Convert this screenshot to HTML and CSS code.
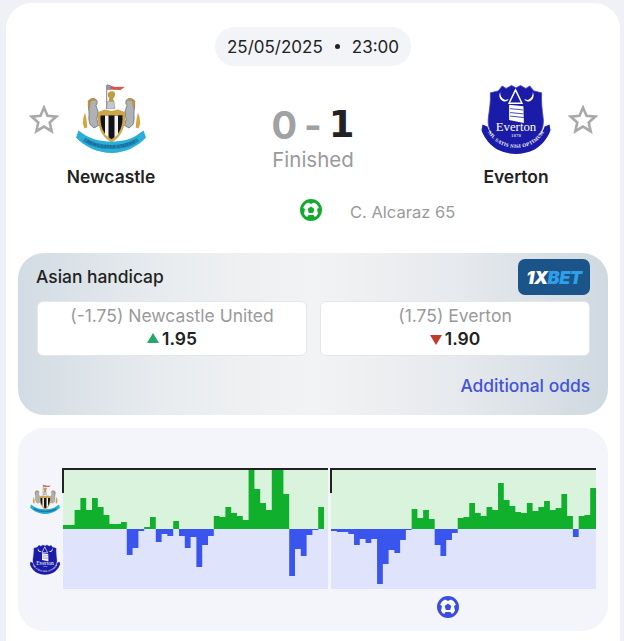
FILE: index.html
```html
<!DOCTYPE html>
<html lang="en">
<head>
<meta charset="utf-8">
<title>Newcastle - Everton</title>
<link rel="stylesheet" href="styles.css">
</head>
<body>
<svg class="defs" width="0" height="0" aria-hidden="true">
  <defs>
    <symbol id="star" viewBox="0 0 30 30">
      <path d="M15 2.6l3.5 8.2 8.9.8-6.7 5.9 2 8.7-7.7-4.6-7.7 4.6 2-8.7-6.700-5.900 8.900-.8z" fill="none" stroke="#a9a9ab" stroke-width="2.600" stroke-linejoin="miter"/>
    </symbol>
    <symbol id="ball" viewBox="0 0 22 22">
      <circle cx="11" cy="11" r="9.500" fill="#fff" stroke="currentColor" stroke-width="3"/>
      <path d="M11 7.500l3.400 2.500-1.300 4h-4.200l-1.300-4z" fill="currentColor"/>
      <path d="M6 2.500l5 2.500 5-2.500-2-1.500h-6zM20.500 8l-3.500 2 1 5 2.500-2zM1.500 8l3.500 2-1 5-2.500-2zM6.500 19l2-3h5l2 3-4.500 2z" fill="currentColor"/>
    </symbol>
    <symbol id="newcastle" viewBox="0 0 70 70">
      <path d="M30.700 1v24" stroke="#7d828c" stroke-width="1"/>
      <path d="M31 .5l8 2.500 10-.2-4.500 3.200L31 5.500z" fill="#d9554c"/>
      <path d="M31 .5l3.500 1v4H31z" fill="#8d94a8"/>
      <path d="M32 9c2-2.500 6-2.500 7 0 .4 2.500-.8 4.500-2 6l1.500 2.500h-6l.8-3.500C32 13.500 31.500 11 32 9z" fill="#c29a45"/>
      <path d="M31.500 17.500h6.500l1 7H30.500z" fill="#c5c7ca" stroke="#6d6f73" stroke-width=".4"/>
      <path d="M7.500 33l1.500-4.500 1.500 7 .8 8-2.800 1-1.700-5z" fill="#d3a63c"/>
      <path d="M63.500 33L62 28.500l-1.500 7-.8 8 2.800 1 1.700-5z" fill="#d3a63c"/>
      <path d="M12 18c1-3.500 6-4.500 8.500-2 1.500 2.500 .5 4-.5 5.500l2 6-1 8 1.500 6-4.500 2.500-4-3.500c-1-3-1.500-6-1-10 .3-4-1.300-7-.5-12.500z" fill="#aeb1b5" stroke="#4c4e52" stroke-width=".6"/>
      <path d="M12 18c1-3.500 6-4.500 8.500-2l-1 1c-3-1-5 0-5 2.500l-.5 6-1.500-2c0-2-1-2.500-.5-5.500z" fill="#b8923f"/>
      <path d="M59 18c-1-3.500-6-4.500-8.500-2-1.500 2.500-.5 4 .5 5.500l-2 6 1 8-1.500 6 4.500 2.500 4-3.500c1-3 1.500-6 1-10-.3-4 1.300-7 .5-12.500z" fill="#aeb1b5" stroke="#4c4e52" stroke-width=".6"/>
      <path d="M59 18c-1-3.500-6-4.500-8.500-2l1 1c3-1 5 0 5 2.500l.5 6 1.500-2c0-2 1-2.500.5-5.500z" fill="#b8923f"/>
      <path d="M22 28l7-2.500 6.500 1.500 6.500-1.500 7 2.500c1 12-2 24-13.500 30.500C24 52 21 40 22 28z" fill="#cfa548"/>
      <path d="M24.500 31.500l22-.2c.5 10-2 18.500-11 24-9-5.500-11.500-14-11-23.800z" fill="#141414"/>
      <path d="M29 31.500h3.500v22l-3.500-2.800zM38.500 31.500H42v19l-3.500 3z" fill="#f4f4f4"/>
      <path d="M2.500 46.500l5 3.500c7 5 17 7.500 28 7.500s21-2.500 27-7.500l5-3.500 2.500 7C62 62.500 49 69 35.500 69S8 62.500 0 53.500z" fill="#2baed8"/>
      <path d="M8 55.500c7 5 17 7.500 27.500 7.500S56 60.500 62 55.500" stroke="#1f86b4" stroke-width="4" fill="none"/>
      <path id="nc-arc" d="M8 56.500c7 5 17 7.800 27.500 7.800S56 61.500 62 56.500" fill="none"/>
      <text class="crest-tiny nc-tiny"><textPath href="#nc-arc" startOffset="50%">NEWCASTLE UNITED</textPath></text>
    </symbol>
    <symbol id="everton" viewBox="0 0 70 71">
      <path d="M9 9l8-2 4-5 4 2.500L30.500 1.500 35 4l4.500-2.500L45 4.500 49 2l4 5 8 2c-.5 9 .5 17 1.500 25 1 8-1 14-6 20-6 5-14 8-21.500 11C27 62 19 59 13 54c-5-6-7-12-6-20 1-8 2.500-16 2-25z" fill="#1a1ba6" stroke="#3a3fc8" stroke-width=".8"/>
      <path d="M1 41l5 2c2 7 7 11 14 14.500 5 2.500 10 3.800 15 3.800s10-1.300 15-3.800C57 54 62 50 64 43l5-2 1 6c-3 9-10 16-16 19.500-6 3-13 4.500-19 4.500s-13-1.500-19-4.500C10 63 3 56 0 47z" fill="#1a1ba6"/>
      <path id="ev-arc" d="M5 46c3 7 8 11.500 14 15 5 2.500 11 3.800 16 3.800s11-1.300 16-3.800c6-3.500 11-8 14-15" fill="none"/>
      <text class="crest-tiny ev-tiny"><textPath href="#ev-arc" startOffset="50%">NIL SATIS NISI OPTIMUM</textPath></text>
      <path d="M19 8c-2 4-.5 8 3 9.500 3 .8 5-.5 5.500-2.500-1.500 1.200-3 1.500-4.500.8-2.800-1.300-4.200-4-4-7.800zM52 8c2 4 .5 8-3 9.500-3 .8-5-.5-5.500-2.500 1.500 1.200 3 1.500 4.500.8 2.800-1.300 4.200-4 4-7.800z" fill="#fff"/>
      <path d="M34.500 6l6.500 13.500H28z" fill="none" stroke="#fff" stroke-width="1.500"/>
      <path d="M28 21l14.500 1.500.5 17-15-3z" fill="#fff"/>
      <path d="M29 25l13 1.300M29 29l13.500 1.300M29 32.500l14 1.500" stroke="#1a1ba6" stroke-width=".8"/>
      <text class="crest-name" x="35" y="47.500">Everton</text>
      <text class="crest-year" x="35" y="54">1878</text>
    </symbol>
  </defs>
</svg>

<main class="card">
  <div class="date-pill"><span>25/05/2025</span><i class="dot"></i><span>23:00</span></div>

  <section class="match">
    <div class="side">
      <svg class="star"><use href="#star"/></svg>
      <div class="team">
        <svg class="crest"><use href="#newcastle"/></svg>
        <div class="team-name">Newcastle</div>
      </div>
    </div>
    <div class="result">
      <div class="score"><span class="score-home">0</span><span class="score-sep">-</span><span class="score-away">1</span></div>
      <div class="status">Finished</div>
    </div>
    <div class="side side-away">
      <div class="team">
        <svg class="crest"><use href="#everton"/></svg>
        <div class="team-name">Everton</div>
      </div>
      <svg class="star"><use href="#star"/></svg>
    </div>
  </section>

  <div class="scorers">
    <span></span>
    <svg class="ball ball-green"><use href="#ball"/></svg>
    <span class="scorer">C. Alcaraz 65</span>
  </div>

  <section class="odds">
    <div class="odds-head">
      <h2 class="odds-title">Asian handicap</h2>
      <div class="bookie"><span class="bookie-x">1X</span><span class="bookie-bet">BET</span></div>
    </div>
    <div class="odds-grid">
      <div class="odd">
        <div class="odd-label">(-1.75) Newcastle United</div>
        <div class="odd-value"><i class="tri tri-up"></i>1.95</div>
      </div>
      <div class="odd">
        <div class="odd-label">(1.75) Everton</div>
        <div class="odd-value"><i class="tri tri-down"></i>1.90</div>
      </div>
    </div>
    <div class="odds-more">Additional odds</div>
  </section>

  <section class="momentum">
    <div class="momentum-row">
      <div class="momentum-crests">
        <svg class="mini-crest"><use href="#newcastle"/></svg>
        <svg class="mini-crest"><use href="#everton"/></svg>
      </div>
      <svg class="chart" viewBox="0 0 534 122">
        <g transform="translate(1 0)">
          <rect class="zone-home" x="0" y="1" width="265" height="60"/>
          <rect class="zone-away" x="0" y="61" width="265" height="60"/>
          <path class="bar-home" d="M0 61V57H11.600V42H17.400V30H23.200V42H29V30H34.800V39H40.600V47H46.400V56H58V54H63.800V61ZM81.200 61V59H87V49H92.800V61ZM110.200 61V53H116V61ZM150.800 61V48H156.600V49H162.400V39H168.200V45H174V48H179.800V52H185.600V2H191.400V21H197.200V35H203V42H208.800V2H220.400V26H226.200V61ZM255.200 61V39H261V61Z"/>
          <path class="bar-away" d="M63.800 61V87H69.600V80H75.400V63H81.200V61ZM92.800 61V74H98.600V66H104.400V68H110.200V61ZM116 61V68H121.800V80H127.600V69H133.400V99H139.200V77H145V68H150.800V61ZM226.200 61V108H232V81H237.800V88H243.600V67H249.400V62H255.200V61Z"/>
          <path class="axis" d="M0 25V1H265"/>
        </g>
        <g transform="translate(269 0)">
          <rect class="zone-home" x="0" y="1" width="265" height="60"/>
          <rect class="zone-away" x="0" y="61" width="265" height="60"/>
          <path class="bar-home" d="M80.640 61V41H86.400V50H92.160V42H97.920V51H103.680V61ZM126.720 61V50H132.480V49H138.240V35H144V45H149.760V48H155.520V39H161.280V42H167.040V15H172.800V32H178.560V38H184.320V44H190.080V45H195.840V35H201.600V43H207.360V39H213.120V33H218.880V42H224.640V40H230.400V26H236.160V48H241.920V61ZM247.680 61V48H253.440V47H259.200V20H265V61Z"/>
          <path class="bar-away" d="M0 61V63H5.760V64H17.280V66H23.040V77H28.800V71H34.560V75H40.320V71H46.080V116H51.840V96H57.600V82H63.360V85H69.120V72H74.880V62H80.640V61ZM103.680 61V77H109.440V88H115.200V72H120.960V65H126.720V61ZM241.920 61V69H247.680V61Z"/>
          <path class="axis" d="M0 25V1H265"/>
        </g>
      </svg>
    </div>
    <div class="goal-row">
      <svg class="ball ball-blue"><use href="#ball"/></svg>
    </div>
  </section>
</main>
</body>
</html>
```

FILE: styles.css
```css
* { box-sizing: border-box; }

html, body { margin: 0; height: 100%; }

body {
  background: #eff1f6;
  font-family: Inter, "Noto Sans", "Liberation Sans", sans-serif;
  color: #222;
  overflow: hidden;
}

.defs { position: absolute; }

.card {
  margin: 3px 4px 0 6px;
  padding: 24px 12px 10px;
  background: #fff;
  border-radius: 26px 26px 0 0;
}

.date-pill {
  display: flex;
  align-items: center;
  justify-content: center;
  gap: 12px;
  width: 196px;
  height: 39px;
  margin: 0 auto;
  background: #f3f4f8;
  border-radius: 20px;
  font-size: 17px;
}

.dot {
  width: 5px;
  height: 5px;
  border-radius: 50%;
  background: #222;
}

.match {
  display: grid;
  grid-template-columns: 1fr auto 1fr;
  margin-top: 18px;
  height: 107px;
}

.side {
  display: flex;
  align-items: flex-start;
  padding-left: 11px;
}

.side-away {
  justify-content: flex-end;
  padding: 0 10px 0 0;
}

.star {
  width: 30px;
  height: 30px;
  margin-top: 21px;
  flex: none;
}

.team {
  width: 104px;
  display: flex;
  flex-direction: column;
  align-items: center;
}

.crest {
  width: 70px;
  height: 70px;
}

.team-name {
  margin-top: 12px;
  font-size: 17.400px;
  font-weight: 600;
  line-height: 21px;
}

.result {
  display: flex;
  flex-direction: column;
  align-items: center;
  padding-top: 19px;
}

.score {
  display: flex;
  align-items: center;
  gap: 7px;
  font-size: 38px;
  font-weight: 700;
  line-height: 44px;
}

.score-home, .score-sep { color: #a1a1a3; }

.score-away {
  color: #222;
  font-family: "DejaVu Sans", sans-serif;
  font-size: 37px;
}

.status {
  margin-top: 1px;
  font-size: 20.500px;
  line-height: 24px;
  color: #9a9a9c;
}

.crest-tiny { font-family: "Liberation Serif", serif; text-anchor: middle; }
.nc-tiny { font-size: 4.600px; fill: #0e4a70; letter-spacing: .3px; }
.ev-tiny { font-size: 5px; fill: #fff; font-weight: 700; letter-spacing: .3px; }
.crest-name { font-family: "Liberation Serif", serif; font-size: 13px; fill: #fff; text-anchor: middle; }
.crest-year { font-family: "Liberation Serif", serif; font-size: 5px; fill: #fff; text-anchor: middle; }

.scorers {
  display: grid;
  grid-template-columns: 1fr 22px 1fr;
  column-gap: 28px;
  align-items: center;
  margin-top: 8px;
  padding-right: 4px;
  height: 24px;
}

.ball { width: 22px; height: 22px; display: block; }
.ball-green { color: #12ab2c; margin-bottom: 4px; }
.ball-blue { color: #3a4fe0; }

.scorer {
  font-size: 16.500px;
  color: #9a9a9c;
}

.odds {
  margin-top: 30px;
  height: 162px;
  padding: 6px 18px 0 19px;
  border-radius: 26px;
  background: linear-gradient(90deg, #d2dce4 0%, #e9ecef 25%, #f2f3f4 50%, #e6e9ed 75%, #cfd9e1 100%);
}

.odds-head {
  display: flex;
  justify-content: space-between;
  align-items: center;
  height: 36px;
}

.odds-title {
  margin: -1px 0 0 -1px;
  font-size: 17.400px;
  font-weight: 500;
}

.bookie {
  display: flex;
  align-items: center;
  justify-content: center;
  width: 72px;
  height: 36px;
  border-radius: 7px;
  background: #1a5488;
  font-size: 18px;
  font-weight: 900;
  font-style: italic;
  letter-spacing: -.5px;
}

.bookie-x { color: #fff; }
.bookie-bet { color: #2f9fe8; }

.odds-grid {
  display: grid;
  grid-template-columns: 1fr 1fr;
  column-gap: 13px;
  margin-top: 6px;
}

.odd {
  height: 55px;
  padding-top: 3px;
  background: #fff;
  border: 1px solid #e3e6ea;
  border-radius: 6px;
  text-align: center;
}

.odd-label {
  font-size: 17.500px;
  line-height: 22px;
  color: #9a9a9c;
}

.odd-value {
  display: flex;
  align-items: center;
  justify-content: center;
  gap: 3px;
  font-size: 17.500px;
  font-weight: 600;
  line-height: 24px;
}

.tri {
  width: 0;
  height: 0;
  border-left: 6px solid transparent;
  border-right: 6px solid transparent;
}

.tri-up { border-bottom: 10px solid #22a868; margin-top: -3px; }
.tri-down { border-top: 10px solid #c0392b; margin-top: 1px; }

.odds-more {
  margin-top: 19px;
  text-align: right;
  font-size: 17.400px;
  font-weight: 500;
  color: #4353d6;
}

.momentum {
  margin-top: 13px;
  height: 203px;
  padding: 40px 0 0 12px;
  border-radius: 26px;
  background: #f3f5fb;
}

.momentum-row {
  display: flex;
}

.momentum-crests {
  width: 32px;
  display: grid;
  grid-template-rows: 60px 60px;
  padding-top: 1px;
  justify-items: start;
  align-items: center;
}

.mini-crest {
  width: 30px;
  height: 31px;
}

.chart {
  width: 534px;
  height: 122px;
  display: block;
}

.zone-home { fill: #daf3dc; }
.zone-away { fill: #dfe3fb; }
.bar-home { fill: #10b02c; }
.bar-away { fill: #3a55ee; }
.axis { fill: none; stroke: #222; stroke-width: 2; }

.goal-row {
  display: flex;
  padding: 6px 0 0 407px;
}
```
